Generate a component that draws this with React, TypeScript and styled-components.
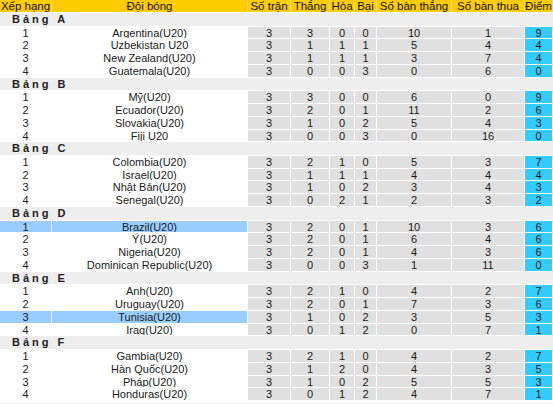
import styled, { createGlobalStyle } from 'styled-components';

type Team = {
  name: string;
  played: number;
  won: number;
  drawn: number;
  lost: number;
  gf: number;
  ga: number;
  pts: number;
  highlight?: boolean;
};

type Group = { label: string; teams: Team[] };

const t = (
  name: string,
  played: number,
  won: number,
  drawn: number,
  lost: number,
  gf: number,
  ga: number,
  pts: number,
  highlight = false,
): Team => ({ name, played, won, drawn, lost, gf, ga, pts, highlight });

const groups: Group[] = [
  {
    label: 'A',
    teams: [
      t('Argentina(U20)', 3, 3, 0, 0, 10, 1, 9),
      t('Uzbekistan U20', 3, 1, 1, 1, 5, 4, 4),
      t('New Zealand(U20)', 3, 1, 1, 1, 3, 7, 4),
      t('Guatemala(U20)', 3, 0, 0, 3, 0, 6, 0),
    ],
  },
  {
    label: 'B',
    teams: [
      t('Mỹ(U20)', 3, 3, 0, 0, 6, 0, 9),
      t('Ecuador(U20)', 3, 2, 0, 1, 11, 2, 6),
      t('Slovakia(U20)', 3, 1, 0, 2, 5, 4, 3),
      t('Fiji U20', 3, 0, 0, 3, 0, 16, 0),
    ],
  },
  {
    label: 'C',
    teams: [
      t('Colombia(U20)', 3, 2, 1, 0, 5, 3, 7),
      t('Israel(U20)', 3, 1, 1, 1, 4, 4, 4),
      t('Nhật Bản(U20)', 3, 1, 0, 2, 3, 4, 3),
      t('Senegal(U20)', 3, 0, 2, 1, 2, 3, 2),
    ],
  },
  {
    label: 'D',
    teams: [
      t('Brazil(U20)', 3, 2, 0, 1, 10, 3, 6, true),
      t('Ý(U20)', 3, 2, 0, 1, 6, 4, 6),
      t('Nigeria(U20)', 3, 2, 0, 1, 4, 3, 6),
      t('Dominican Republic(U20)', 3, 0, 0, 3, 1, 11, 0),
    ],
  },
  {
    label: 'E',
    teams: [
      t('Anh(U20)', 3, 2, 1, 0, 4, 2, 7),
      t('Uruguay(U20)', 3, 2, 0, 1, 7, 3, 6),
      t('Tunisia(U20)', 3, 1, 0, 2, 3, 5, 3, true),
      t('Iraq(U20)', 3, 0, 1, 2, 0, 7, 1),
    ],
  },
  {
    label: 'F',
    teams: [
      t('Gambia(U20)', 3, 2, 1, 0, 4, 2, 7),
      t('Hàn Quốc(U20)', 3, 1, 2, 0, 4, 3, 5),
      t('Pháp(U20)', 3, 1, 0, 2, 5, 5, 3),
      t('Honduras(U20)', 3, 0, 1, 2, 4, 7, 1),
    ],
  },
];

const headers = ['Xếp hạng', 'Đội bóng', 'Số trận', 'Thắng', 'Hòa', 'Bại', 'Số bàn thắng', 'Số bàn thua', 'Điểm'];

const COLUMNS = '51px 195px 42px 38px 24px 21px 74px 72px 27px';

const GlobalStyle = createGlobalStyle`
  html, body {
    margin: 0;
    padding: 0;
    background: #fff;
  }
  body {
    font-family: "Liberation Sans", Arial, sans-serif;
    color: #1a1a1a;
    overflow: hidden;
  }
`;

const Table = styled.div`
  width: 553px;
  display: flex;
  flex-direction: column;
  gap: 1px;
`;

const HeaderRow = styled.div`
  display: grid;
  grid-template-columns: ${COLUMNS};
  column-gap: 1px;
  height: 12px;
  background: #f6dc7a;
`;

const HeaderCell = styled.div`
  background: #ffcc00;
  font-size: 11.5px;
  line-height: 12px;
  text-align: center;
  white-space: nowrap;
  overflow: hidden;
  color: #111;
`;

const GroupRow = styled.div`
  height: 12.5px;
  background: #eeeeee;
  font-size: 11px;
  font-weight: bold;
  line-height: 13px;
  letter-spacing: 3px;
  padding-left: 12px;
  color: #222;
`;

const TeamRow = styled.div`
  display: grid;
  grid-template-columns: ${COLUMNS};
  column-gap: 1px;
  height: 11.8px;
`;

const Cell = styled.div<{ $tone: 'plain' | 'stat' | 'points' | 'picked' }>`
  font-size: 11px;
  line-height: 12px;
  text-align: center;
  white-space: nowrap;
  overflow: hidden;
  background: ${({ $tone }) =>
    $tone === 'stat' ? '#e0e0e0' : $tone === 'points' ? '#33ccff' : $tone === 'picked' ? '#99ccff' : 'transparent'};
`;

const TailRow = styled.div`
  margin-top: 2px;
  height: 12px;
  background: #eeeeee;
`;

export default function App() {
  return (
    <>
      <GlobalStyle />
      <Table>
        <HeaderRow>
          {headers.map((h) => (
            <HeaderCell key={h}>{h}</HeaderCell>
          ))}
        </HeaderRow>
        {groups.map((g) => [
          <GroupRow key={g.label}>Bảng {g.label}</GroupRow>,
          ...g.teams.map((team, i) => {
            const lead = team.highlight ? 'picked' : 'plain';
            return (
              <TeamRow key={team.name}>
                <Cell $tone={lead}>{i + 1}</Cell>
                <Cell $tone={lead}>{team.name}</Cell>
                <Cell $tone="stat">{team.played}</Cell>
                <Cell $tone="stat">{team.won}</Cell>
                <Cell $tone="stat">{team.drawn}</Cell>
                <Cell $tone="stat">{team.lost}</Cell>
                <Cell $tone="stat">{team.gf}</Cell>
                <Cell $tone="stat">{team.ga}</Cell>
                <Cell $tone="points">{team.pts}</Cell>
              </TeamRow>
            );
          }),
        ])}
        <TailRow />
      </Table>
    </>
  );
}
